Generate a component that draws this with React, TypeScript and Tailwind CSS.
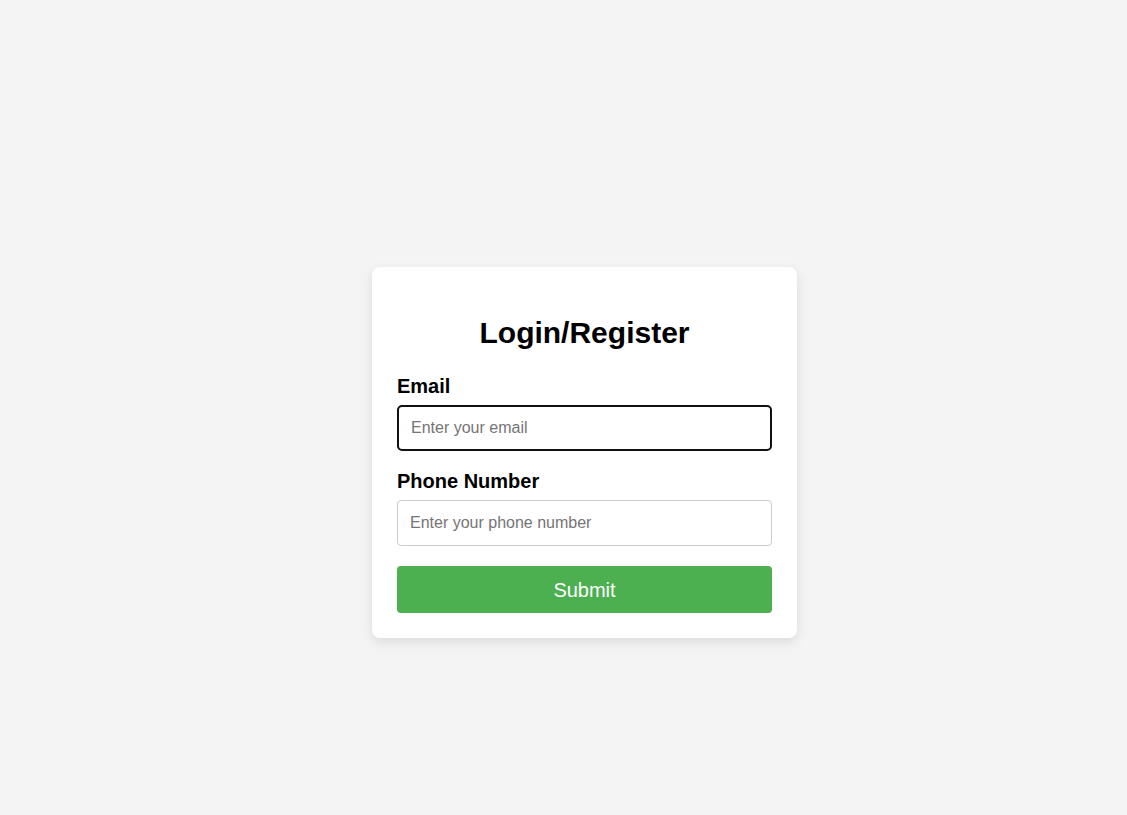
export default function App() {
  return (
    <div className="min-h-screen w-full bg-[#f4f4f4] flex justify-center pt-[267px] pl-[42px] font-['Liberation_Sans',Arial,sans-serif]">
      <div className="w-[425px] h-fit bg-white rounded-[8px] shadow-[0_4px_12px_rgba(0,0,0,0.1)] px-[25px] pt-[49px] pb-[25px] flex flex-col">
        <h2 className="text-[30px] leading-[34px] font-bold text-black text-center mb-[25px]">Login/Register</h2>

        <label htmlFor="email" className="block text-[20px] leading-[23px] font-bold text-black mb-[7px]">
          Email
        </label>
        <input
          id="email"
          type="email"
          autoFocus
          placeholder="Enter your email"
          className="w-full h-[46px] px-[12px] border-2 border-[#111] rounded-[5px] text-[16px] text-black placeholder-[#757575] outline-none mb-[19px]"
        />

        <label htmlFor="phone" className="block text-[20px] leading-[23px] font-bold text-black mb-[7px]">
          Phone Number
        </label>
        <input
          id="phone"
          type="tel"
          placeholder="Enter your phone number"
          className="w-full h-[46px] px-[12px] border border-[#ccc] rounded-[4px] text-[16px] text-black placeholder-[#757575] outline-none mb-[20px]"
        />

        <button className="w-full h-[47px] bg-[#4caf50] text-white text-[20px] rounded-[4px]">
          Submit
        </button>
      </div>
    </div>
  )
}
